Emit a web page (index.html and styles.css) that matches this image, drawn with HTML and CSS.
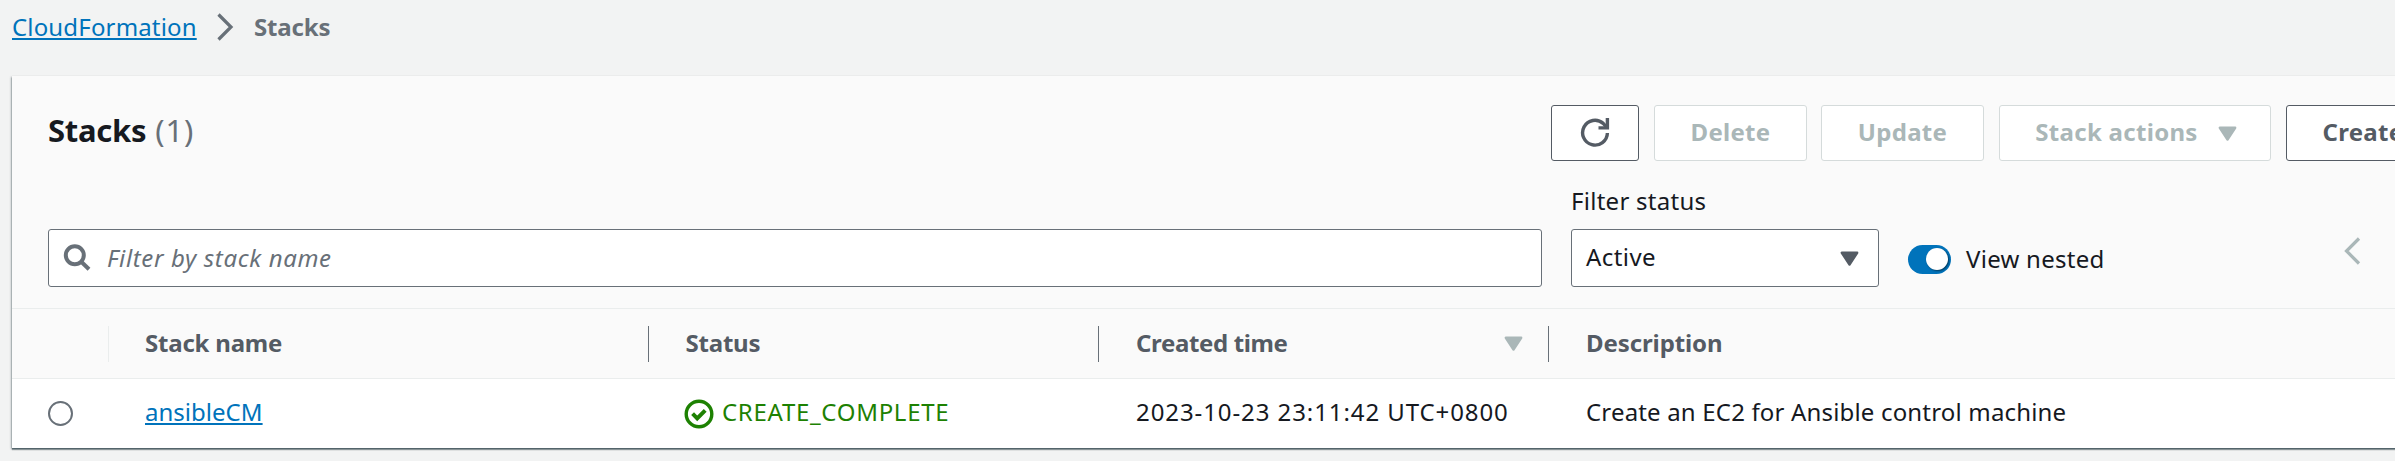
FILE: index.html
```html
<!DOCTYPE html>
<html lang="en">
<head>
<meta charset="utf-8">
<title>CloudFormation - Stacks</title>
<link rel="stylesheet" href="styles.css">
</head>
<body>
<nav class="breadcrumb">
  <a class="link crumb-link" href="#">CloudFormation</a>
  <svg class="crumb-sep" width="18" height="30" viewBox="0 0 18 30"><path d="M2.5 2.5 15 15 2.5 27.5" fill="none" stroke="#687078" stroke-width="3.2"/></svg>
  <span class="crumb-current">Stacks</span>
</nav>
<main class="panel">
  <header class="panel-head">
    <h1 class="title">Stacks <span class="count">(1)</span></h1>
    <div class="actions">
      <button class="btn btn-refresh" aria-label="Refresh">
        <svg width="30" height="30" viewBox="0 0 30 30" fill="none" stroke="#545b64" stroke-width="3.4"><path d="M27.4 16A12.4 12.4 0 1 1 23.2 6.4L26.8 10.4"/><path d="M27.4 1v9.9H18.5"/></svg>
      </button>
      <button class="btn btn-delete" disabled>Delete</button>
      <button class="btn btn-update" disabled>Update</button>
      <button class="btn btn-menu" disabled><span>Stack actions</span>
        <svg class="caret" width="19" height="16" viewBox="0 0 19 16"><path d="M1.8 1.8h15.4L9.5 13.6z" fill="#aab7b8" stroke="#aab7b8" stroke-width="2.4" stroke-linejoin="round"/></svg>
      </button>
      <button class="btn btn-create">Create stack</button>
    </div>
  </header>
  <section class="filters">
    <div class="search">
      <svg width="28" height="28" viewBox="0 0 28 28" fill="none" stroke="#687078" stroke-width="4"><circle cx="11.8" cy="11.3" r="9"/><path d="m18 17.5 8 7.8"/></svg>
      <span class="placeholder">Filter by stack name</span>
    </div>
    <div class="status">
      <label class="status-label">Filter status</label>
      <div class="select"><span>Active</span>
        <svg class="caret" width="19" height="16" viewBox="0 0 19 16"><path d="M1.8 1.8h15.4L9.5 13.6z" fill="#545b64" stroke="#545b64" stroke-width="2.4" stroke-linejoin="round"/></svg>
      </div>
    </div>
    <div class="nested"><span class="toggle"><span class="knob"></span></span><span class="nested-label">View nested</span></div>
    <svg class="prev" width="18" height="30" viewBox="0 0 18 30"><path d="M16 2.5 3.5 15 16 27.5" fill="none" stroke="#aab7b8" stroke-width="3.2"/></svg>
  </section>
  <div class="table">
    <div class="row head">
      <div class="cell pick"></div>
      <div class="cell"><span class="h-name">Stack name</span></div>
      <div class="cell"><span class="h-status">Status</span></div>
      <div class="cell sorted"><span class="h-created">Created time</span>
        <svg class="caret" width="19" height="16" viewBox="0 0 19 16"><path d="M1.8 1.8h15.4L9.5 13.6z" fill="#aab7b8" stroke="#aab7b8" stroke-width="2.4" stroke-linejoin="round"/></svg>
      </div>
      <div class="cell"><span class="h-desc">Description</span></div>
    </div>
    <div class="row body">
      <div class="cell pick"><span class="radio"></span></div>
      <div class="cell"><a class="link name" href="#">ansibleCM</a></div>
      <div class="cell complete">
        <svg width="30" height="30" viewBox="0 0 30 30" fill="none" stroke="#1d8102"><circle cx="15" cy="15" r="12.8" stroke-width="3.4"/><path d="m8.6 14.7 4.6 4.6 8-8" stroke-width="4"/></svg>
        <span class="state">CREATE_COMPLETE</span>
      </div>
      <div class="cell"><span class="date">2023-10-23 23:11:42 UTC+0800</span></div>
      <div class="cell"><span class="desc">Create an EC2 for Ansible control machine</span></div>
    </div>
  </div>
</main>
</body>
</html>
```
FILE: styles.css
```css
* { box-sizing: border-box; }
body {
  margin: 0;
  height: 461px;
  overflow: hidden;
  background: #f2f3f3;
  color: #16191f;
  font: 24px/30px "Noto Sans", "Open Sans", sans-serif;
  white-space: nowrap;
}
svg { display: block; flex: none; }
.link {
  color: #0073bb;
  text-decoration: underline;
  text-decoration-thickness: 2px;
  text-underline-offset: 2px;
  text-decoration-skip-ink: none;
}
.breadcrumb { display: flex; align-items: center; padding: 12px 0 0 12px; height: 42px; }
.crumb-link { letter-spacing: .16px; width: 185px; }
.crumb-sep { margin: 0 20px 0 19px; }
.crumb-current { color: #687078; font-weight: 700; letter-spacing: -.16px; }

.panel {
  margin: 34px 0 0 12px;
  width: 2500px;
  height: 372px;
  background: #fafafa;
  box-shadow: 0 1px 1px rgba(0, 28, 36, .3), 1px 1px 2px rgba(0, 28, 36, .15), -1px 1px 2px rgba(0, 28, 36, .3), 0 2px 1px rgba(0, 28, 36, .3);
}
.panel-head { display: flex; align-items: center; padding: 29px 0 0 36px; height: 85px; }
.title { flex: none; margin: 0; width: 1503px; padding-bottom: 6px; font-size: 31px; line-height: 40px; font-weight: 700; letter-spacing: -.25px; }
.count { margin-left: 1px; color: #687078; font-weight: 400; letter-spacing: .9px; }
.actions { display: flex; gap: 15px; }
.btn {
  display: flex; align-items: center; justify-content: center; flex: none;
  height: 56px; padding: 0 0 2px;
  border: 1px solid #545b64; border-radius: 3px;
  background: #fff; color: #545b64;
  font: 700 24px/30px "Noto Sans", "Open Sans", sans-serif;
  letter-spacing: .3px;
}
.btn:disabled { border-color: #d5dbdb; color: #aab7b8; }
.btn-refresh { width: 88px; }
.btn-delete { width: 153px; margin-right: -1px; }
.btn-update { width: 163px; }
.btn-menu { width: 272px; gap: 20px; padding-left: 2px; }
.btn-menu .caret { margin-top: 3px; }
.btn-create { width: 226px; }

.filters { display: flex; align-items: flex-end; padding: 0 0 21px 36px; height: 147px; }
.search {
  display: flex; align-items: center; width: 1494px; height: 58px; margin-right: 29px; padding-left: 14px;
  border: 1px solid #687078; border-radius: 3px; background: #fff;
}
.placeholder { margin-left: 16px; color: #687078; font-style: italic; letter-spacing: .64px; padding-bottom: 1px; }
.status { display: flex; flex-direction: column; gap: 13px; width: 308px; }
.status-label { letter-spacing: .27px; }
.select {
  display: flex; align-items: center; justify-content: space-between; height: 58px; padding: 0 19px 2px 14px;
  border: 1px solid #687078; border-radius: 3px; background: #fff; letter-spacing: .42px;
}
.select .caret { margin-top: 3px; }
.nested { display: flex; align-items: center; height: 58px; margin-left: 29px; width: 435px; padding-top: 2px; }
.toggle { display: flex; align-items: center; justify-content: flex-end; width: 43px; height: 29px; padding-right: 3px; border-radius: 15px; background: #0073bb; }
.knob { width: 22px; height: 22px; border-radius: 50%; background: #fff; box-shadow: 1px 1px 2px rgba(0, 0, 0, .5); }
.nested-label { margin-left: 15px; letter-spacing: .27px; }
.prev { margin-bottom: 21px; }

.row { display: grid; grid-template-columns: 97px 540px 450px 450px 1fr; height: 70px; border-top: 1px solid #eaeded; }
.cell { display: flex; align-items: center; padding-left: 36px; }
.head { color: #545b64; font-weight: 700; letter-spacing: -.21px; }
.head .cell { position: relative; padding-bottom: 1px; }
.head .cell:not(:last-child)::after { content: ""; position: absolute; right: 0; top: 17px; width: 1px; height: 36px; background: #687078; }
.head .pick::after { background: #eaeded !important; }
.h-created { letter-spacing: -.36px; }
.h-desc { letter-spacing: -.1px; }
.h-status { margin-left: .5px; }
.h-created, .date, .h-desc, .desc { margin-left: 1px; }
.sorted { justify-content: space-between; padding-right: 26px; }
.sorted .caret { margin-top: 2px; }
.body { background: #fff; }
.body .cell { padding-bottom: 3px; }
.body .pick { padding-bottom: 0; }
.radio { width: 25px; height: 25px; border: 2px solid #687078; border-radius: 50%; background: #fff; }
.name { letter-spacing: .02px; }
.body .complete { color: #1d8102; gap: 8px; padding-left: 35px; }
.complete svg { margin-top: 3px; }
.state { letter-spacing: .7px; }
.date { letter-spacing: .91px; }
.desc { letter-spacing: .17px; }
```
